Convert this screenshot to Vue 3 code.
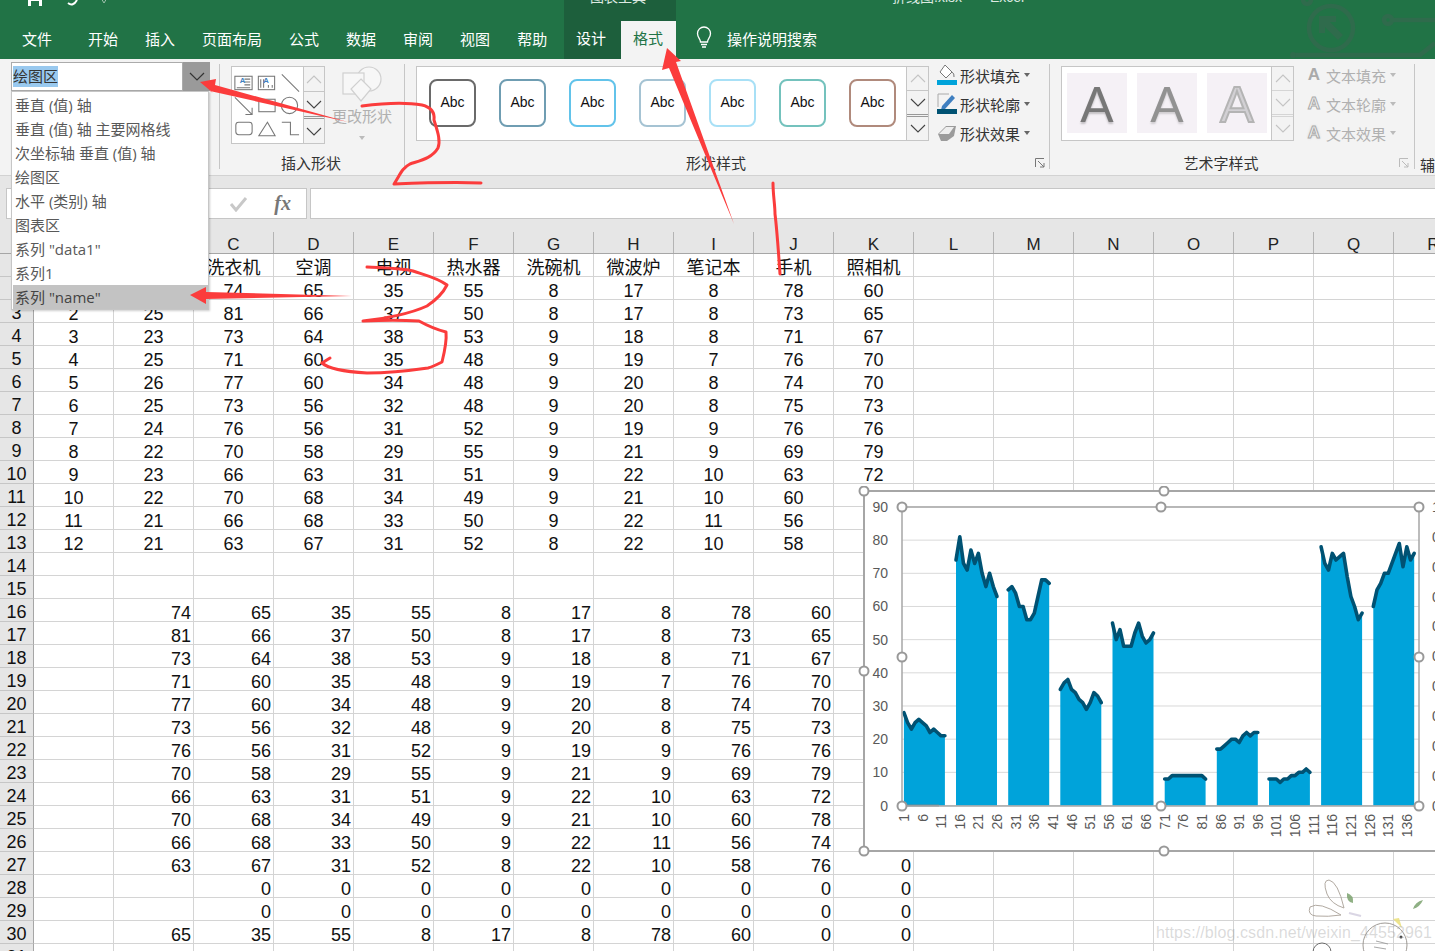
<template>
  <div class="page">
    <!-- Title bar + tabs -->
    <header class="header">
      <div class="head-main">
        <div class="strip">
          <svg class="qat" width="110" height="21" viewBox="0 0 110 21">
            <path d="M28 -6h14v12h-14z" fill="#fff" />
            <path d="M31 1h8v5h-8z" fill="#217346" />
            <path d="M68 3q5 4 9 -3" fill="none" stroke="#fff" stroke-width="2" />
            <path d="M107 -2l-3 5l-3 -5" fill="none" stroke="#9dbfab" stroke-width="1" />
          </svg>
        </div>
        <nav class="tabs">
          <span v-for="tab in mainTabs" :key="tab" class="tab">{{ tab }}</span>
        </nav>
      </div>
      <div class="head-tools">
        <div class="strip"><span class="clip-title tools-title">图表工具</span></div>
        <nav class="tabs tools-tabs">
          <span class="tab">设计</span>
          <span class="tab tab-active">格式</span>
        </nav>
      </div>
      <div class="head-right">
        <div class="strip"><span class="clip-title file-title">折线图.xlsx &nbsp;&nbsp;-&nbsp;&nbsp; Excel</span></div>
        <div class="tabs search">
          <svg width="20" height="24" viewBox="0 0 20 24">
            <path d="M6.5 16c0-3-3-4.500-3-8.500a6.500 6.500 0 0 1 13 0c0 4-3 5.500-3 8.500z" fill="none" stroke="#fff" stroke-width="1.300" />
            <path d="M7 18.500h6M8 21h4" stroke="#fff" stroke-width="1.300" />
          </svg>
          <span>操作说明搜索</span>
        </div>
        <svg class="circuit" width="145" height="59" viewBox="0 0 145 59">
          <g fill="none" stroke="#2f6b4c" stroke-width="4.500">
            <circle cx="41" cy="28" r="22" />
            <circle cx="17" cy="0" r="4" />
            <circle cx="98" cy="20" r="4" />
            <path d="M102 20h43M3 55h127l15 -12" />
          </g>
          <path d="M29 16h17v6h-6l13 13l-5 5l-13 -13v6h-6z" fill="#2f6b4c" />
          <circle cx="3" cy="55" r="3" fill="#2f6b4c" />
        </svg>
      </div>
    </header>

    <!-- Ribbon -->
    <section class="ribbon">
      <div class="group group-select">
        <div class="name-select">
          <div class="name-input"><span class="selected-text">绘图区</span></div>
          <div class="name-arrow">
            <svg width="16" height="10" viewBox="0 0 16 10"><path d="M1 1l7 7l7 -7" fill="none" stroke="#333" stroke-width="1.200" /></svg>
          </div>
        </div>
      </div>

      <div class="group group-shapes">
        <div class="group-body">
          <div class="gallery shape-gallery">
            <svg width="74" height="76" viewBox="0 0 74 76">
              <g fill="none" stroke="#777" stroke-width="1.100">
                <rect x="3" y="8" width="18" height="14" />
                <path d="M13 11h6M13 14h6M13 17h6M5 20h14" />
                <rect x="27.500" y="8" width="17" height="14" />
                <path d="M30 11v9M33 11v9M42 17v3M38 17v3" />
                <path d="M52 6l18 18" />
                <path d="M3 30l18 18M21 41v7h-7" />
                <rect x="28" y="32" width="17" height="13" />
                <circle cx="60" cy="38.500" r="8.500" />
                <rect x="4" y="56" width="17" height="13" rx="3" />
                <path d="M37 56l8 14h-17z" />
                <path d="M52 56h9v13h9" />
              </g>
              <text x="8" y="15" class="mini-a">A</text>
              <text x="32.500" y="15" class="mini-a">A</text>
            </svg>
            <div class="spin"><span v-for="n in 3" :key="n" class="spin-btn" :class="{ 'spin-first': n === 1, 'spin-more': n === 3 }"><svg width="16" height="9" viewBox="0 0 16 9"><path :d="n === 1 ? 'M1 8l7 -7l7 7' : 'M1 1l7 7l7 -7'" fill="none" :stroke="n === 1 ? '#c4c4c4' : '#444'" stroke-width="1.100" /></svg></span></div>
          </div>
          <div class="change-shape">
            <svg width="40" height="38" viewBox="0 0 40 38">
              <g fill="#f7f7f7" stroke="#d0d0d0" stroke-width="1.200">
                <circle cx="27" cy="13" r="12" />
                <rect x="1" y="7" width="21" height="21" />
                <path d="M19 13l10 10l-10 12l-10 -12z" />
              </g>
            </svg>
            <span class="change-label">更改形状</span>
            <i class="caret caret-light"></i>
          </div>
        </div>
        <div class="group-label">插入形状</div>
      </div>

      <div class="group group-styles">
        <div class="group-body">
          <div class="gallery style-gallery">
            <div class="abc-list">
              <span v-for="c in abcColors" :key="c" class="abc" :style="{ borderColor: c }">Abc</span>
            </div>
            <div class="spin"><span v-for="n in 3" :key="n" class="spin-btn" :class="{ 'spin-first': n === 1, 'spin-more': n === 3 }"><svg width="16" height="9" viewBox="0 0 16 9"><path :d="n === 1 ? 'M1 8l7 -7l7 7' : 'M1 1l7 7l7 -7'" fill="none" :stroke="n === 1 ? '#c4c4c4' : '#444'" stroke-width="1.100" /></svg></span></div>
          </div>
          <div class="commands">
            <div class="command">
              <svg width="20" height="22" viewBox="0 0 20 22">
                <path d="M8 1l7 7l-6 6l-6 -6z" fill="#fff" stroke="#777" />
                <path d="M14 7q4 3 3 6" fill="none" stroke="#777" />
                <rect x="0" y="16" width="20" height="5" fill="#00a3da" />
              </svg>
              <span>形状填充</span><i class="caret"></i>
            </div>
            <div class="command">
              <svg width="20" height="22" viewBox="0 0 20 22">
                <path d="M1 1h11M1 1v13" fill="none" stroke="#aaa" />
                <path d="M5 13l10 -11l3 3l-10 11l-4 1z" fill="#3f7fc0" />
                <rect x="0" y="16" width="20" height="5" fill="#005273" />
              </svg>
              <span>形状轮廓</span><i class="caret"></i>
            </div>
            <div class="command">
              <svg width="20" height="20" viewBox="0 0 20 20">
                <path d="M1 11l8 -8h10l-2 10l-7 5h-6z" fill="#9b9b9b" />
                <path d="M2 11l7 -7h8l-5 7z" fill="#eee" />
              </svg>
              <span>形状效果</span><i class="caret"></i>
            </div>
          </div>
        </div>
        <div class="group-label">形状样式</div>
        <svg class="launcher" width="10" height="10" viewBox="0 0 10 10"><path d="M.5 9V.5H9M3 3l6 6M9 5v4H5" fill="none" stroke="#777" /></svg>
      </div>

      <div class="group group-word">
        <div class="group-body">
          <div class="gallery word-gallery">
            <div class="word-list">
              <span class="word-tile word-dark">A</span>
              <span class="word-tile word-mid">A</span>
              <span class="word-tile word-line">A</span>
            </div>
            <div class="spin spin-off"><span v-for="n in 3" :key="n" class="spin-btn" :class="{ 'spin-first': n === 1, 'spin-more': n === 3 }"><svg width="16" height="9" viewBox="0 0 16 9"><path :d="n === 1 ? 'M1 8l7 -7l7 7' : 'M1 1l7 7l7 -7'" fill="none" stroke="#c4c4c4" stroke-width="1.100" /></svg></span></div>
          </div>
          <div class="commands commands-off">
            <div class="command"><b class="cmd-a cmd-a-solid">A</b><span>文本填充</span><i class="caret caret-light"></i></div>
            <div class="command"><b class="cmd-a cmd-a-outline">A</b><span>文本轮廓</span><i class="caret caret-light"></i></div>
            <div class="command"><b class="cmd-a cmd-a-glow">A</b><span>文本效果</span><i class="caret caret-light"></i></div>
          </div>
        </div>
        <div class="group-label">艺术字样式</div>
        <svg class="launcher launcher-off" width="10" height="10" viewBox="0 0 10 10"><path d="M.5 9V.5H9M3 3l6 6M9 5v4H5" fill="none" stroke="#bbb" /></svg>
      </div>

      <div class="group group-rest"><div class="group-label">辅</div></div>
    </section>

    <div class="band"></div>

    <!-- Formula bar -->
    <div class="formula-bar">
      <div class="fx-box">
        <svg width="20" height="16" viewBox="0 0 20 16"><path d="M2 8l5 6l10 -12" fill="none" stroke="#c8c8c8" stroke-width="3" /></svg>
        <span class="fx">fx</span>
      </div>
      <div class="formula-input"></div>
    </div>

    <!-- Sheet -->
    <div class="sheet">
      <div class="col-head">
        <span class="corner"></span>
        <span v-for="col in columns" :key="col" class="col-name">{{ col }}</span>
      </div>
      <div v-for="row in rows" :key="row.no" class="row">
        <span class="row-no">{{ row.no }}</span>
        <span
          v-for="(cell, i) in row.cells"
          :key="i"
          class="cell"
          :class="{ 'cell-num': row.right }"
        >{{ cell }}</span>
      </div>
    </div>

    <!-- Dropdown of chart elements -->
    <ul class="dropdown">
      <li v-for="(item, i) in chartParts" :key="item" :class="{ hover: i === chartParts.length - 1 }">{{ item }}</li>
    </ul>

    <!-- Chart object floating on the sheet -->
    <svg class="chart" width="579" height="372" viewBox="856 486 579 372">
      <rect x="864" y="491" width="600" height="360" fill="#fff" stroke="#a6a6a6" stroke-width="2" />
      <line
        v-for="g in gridLines"
        :key="g.v"
        x1="902"
        x2="1419"
        :y1="g.y"
        :y2="g.y"
        stroke="#d9d9d9"
        stroke-width="1"
      />
      <path v-for="(s, i) in seriesShapes" :key="'a' + i" :d="s.area" fill="#00a3da" />
      <path d="M903 805.500h36" stroke="#6e8a96" stroke-width="2" />
      <path v-for="(s, i) in seriesShapes" :key="'l' + i" :d="s.line" fill="none" stroke="#005273" stroke-width="3.600" stroke-linejoin="round" stroke-linecap="round" />
      <rect x="902" y="507" width="517" height="299" fill="none" stroke="#a6a6a6" stroke-width="1.500" />
      <text v-for="g in gridLines" :key="'t' + g.v" x="888" :y="g.y + 5" text-anchor="end" class="axis-text">{{ g.v }}</text>
      <text v-for="g in rightLabels" :key="'r' + g.t" x="1432" :y="g.y + 5" class="axis-text">{{ g.t }}</text>
      <text
        v-for="t in xLabels"
        :key="t.label"
        text-anchor="end"
        class="axis-text"
        :transform="`translate(${t.x + 5} 814) rotate(-90)`"
      >{{ t.label }}</text>
      <circle v-for="h in handles" :key="h[0] + '-' + h[1]" :cx="h[0]" :cy="h[1]" r="4.500" fill="#fff" stroke="#999" stroke-width="2" />
    </svg>

    <!-- Sticker + watermark of the blog -->
    <svg class="sticker" width="130" height="75" viewBox="1305 876 130 75">
      <g fill="none" stroke="#a59c92" stroke-width="1">
        <path d="M1344 908q-6 -26 -15 -28q-7 0 -2 14q4 10 17 14z" />
        <path d="M1341 915q-22 -14 -31 -8q-3 8 6 9q12 1 25 -1z" />
        <path d="M1349 913l12 3" stroke="#d4cfe0" stroke-width="2" />
        <circle cx="1385" cy="945" r="22" stroke="#8f8a84" />
        <path d="M1376 941l12 3M1374 947l12 2" stroke="#999" />
      </g>
      <path d="M1347 893q7 2 6 10q-7 -1 -6 -10zM1423 900q-3 7 -10 9q2 -7 10 -9z" fill="#7ca36f" />
      <path d="M1393 919l6 -1l3 10z" fill="#ebe07a" />
      <circle cx="1401" cy="937" r="1.500" fill="#222" />
      <circle cx="1322" cy="952" r="9" fill="#fff" stroke="#555" />
    </svg>
    <div class="watermark">https://blog.csdn.net/weixin_44552961</div>

    <!-- Red pen marks over the screenshot -->
    <svg class="marks" width="1435" height="951" viewBox="0 0 1435 951">
      <g fill="#fb3c3c">
        <path d="M200 82L216 79L215 85L348 122L210 91L213 93z" />
        <path d="M190 295L206 287L206 292L352 296L206 299L206 304z" />
        <path d="M667 48L681 61L676 62L734 224L669 68L662 70z" />
      </g>
      <g fill="none" stroke="#fb3c3c" stroke-width="3" stroke-linecap="round" stroke-linejoin="round">
        <path d="M362 106C385 103 405 102 422 105C430 107 435 112 434 120C437 130 441 140 438 148C432 158 422 160 410 164C402 168 400 175 394 184C420 183 455 182 481 183" />
        <path d="M367 267C385 268 400 268 413 271C425 275 438 278 447 285C443 293 436 300 427 306C412 313 385 319 363 321C385 320 402 320 419 321C428 326 438 330 446 332C447 342 444 354 442 362C436 365 432 367 428 368C400 372 385 373 367 373C350 372 330 370 322 363L330 358" />
        <path d="M773 183C773 195 775 205 775 214C777 230 778 245 780 274" />
      </g>
    </svg>
  </div>
</template>

<script setup>
import { computed } from 'vue'

const mainTabs = ['文件', '开始', '插入', '页面布局', '公式', '数据', '审阅', '视图', '帮助']
const abcColors = ['#6a6a6a', '#6f9db2', '#62c3ea', '#a5c3d3', '#a8e0f6', '#74c2bd', '#b08a7c']
const chartParts = ['垂直 (值) 轴', '垂直 (值) 轴 主要网格线', '次坐标轴 垂直 (值) 轴', '绘图区', '水平 (类别) 轴', '图表区', '系列 "data1"', '系列1', '系列 "name"']
const columns = 'ABCDEFGHIJKLMNOPQR'.split('')
const headers = ['', '', '洗衣机', '空调', '电视', '热水器', '洗碗机', '微波炉', '笔记本', '手机', '照相机']

// sheet rows 2..13
const data = [
  [1, 28, 74, 65, 35, 55, 8, 17, 8, 78, 60],
  [2, 25, 81, 66, 37, 50, 8, 17, 8, 73, 65],
  [3, 23, 73, 64, 38, 53, 9, 18, 8, 71, 67],
  [4, 25, 71, 60, 35, 48, 9, 19, 7, 76, 70],
  [5, 26, 77, 60, 34, 48, 9, 20, 8, 74, 70],
  [6, 25, 73, 56, 32, 48, 9, 20, 8, 75, 73],
  [7, 24, 76, 56, 31, 52, 9, 19, 9, 76, 76],
  [8, 22, 70, 58, 29, 55, 9, 21, 9, 69, 79],
  [9, 23, 66, 63, 31, 51, 9, 22, 10, 63, 72],
  [10, 22, 70, 68, 34, 49, 9, 21, 10, 60, 78],
  [11, 21, 66, 68, 33, 50, 9, 22, 11, 56, 74],
  [12, 21, 63, 67, 31, 52, 8, 22, 10, 58, 76]
]

const rows = computed(() => {
  const out = [{ no: 1, cells: headers }]
  data.forEach((d, i) => out.push({ no: i + 2, cells: d }))
  out.push({ no: 14, cells: [] }, { no: 15, cells: [] })
  // rows 16..27 hold the same numbers, moved one column to the left
  data.forEach((d, i) => {
    const cells = ['', ...d.slice(2)]
    if (i === 11) cells.push(0)
    out.push({ no: i + 16, cells, right: true })
  })
  const zeros = ['', '', 0, 0, 0, 0, 0, 0, 0, 0, 0]
  out.push({ no: 28, cells: zeros, right: true })
  out.push({ no: 29, cells: zeros, right: true })
  out.push({ no: 30, cells: ['', 65, 35, 55, 8, 17, 8, 78, 60, 0, 0], right: true })
  out.push({ no: 31, cells: [] })
  return out
})

// chart geometry
const yOf = (v) => 805.5 - v * 3.317
const xOf = (i) => 903.9 + i * 3.725

const gridLines = computed(() => [90, 80, 70, 60, 50, 40, 30, 20, 10, 0].map((v) => ({ v, y: yOf(v) })))
const rightLabels = computed(() => Array.from({ length: 11 }, (_, i) => ({
  t: i === 0 ? '1' : (1 - i / 10).toFixed(1).replace('0.0', '0'),
  y: 507 + i * 29.85
})))
const xLabels = computed(() => Array.from({ length: 28 }, (_, i) => ({ label: i * 5 + 1, x: xOf(i * 5) })))

const seriesShapes = computed(() => {
  const shapes = []
  for (let c = 1; c <= 10; c++) {
    const start = (c - 1) * 14
    const pts = data.map((d, i) => `${xOf(start + i).toFixed(1)} ${yOf(d[c]).toFixed(1)}`)
    const line = 'M' + pts.join('L')
    const area = `${line}L${xOf(start + 11).toFixed(1)} 805.5L${xOf(start).toFixed(1)} 805.5Z`
    shapes.push({ line, area })
  }
  return shapes
})

const handles = [
  [864, 491], [1164, 491], [864, 671], [864, 851], [1164, 851],
  [902, 507], [1161, 507], [1419, 507], [902, 657], [1419, 657], [902, 806], [1161, 806], [1419, 806]
]
</script>

<style>
html, body {
  margin: 0;
  background: #fff;
}
</style>

<style scoped>
.page {
  position: relative;
  width: 1435px;
  height: 951px;
  overflow: hidden;
  font-family: "Liberation Sans", "Noto Sans CJK SC", sans-serif;
  color: #222;
  background: #fff;
}

/* Header */
.header {
  display: flex;
  height: 59px;
  background: #217346;
  color: #fff;
  font-size: 15px;
}
.head-main { width: 564px; }
.head-tools { width: 112px; background: #1d5f3c; }
.head-right { position: relative; flex: 1; }
.strip { height: 21px; overflow: hidden; }
.qat { display: block; }
.clip-title { display: block; margin-top: -14px; line-height: 22px; font-size: 14px; color: #dce9e1; white-space: nowrap; }
.tools-title { padding-left: 26px; }
.file-title { padding-left: 216px; }
.tabs { display: flex; height: 38px; box-sizing: border-box; padding-bottom: 4px; align-items: center; gap: 27px; padding-left: 22px; }
.tab:first-child { margin-right: 9px; }
.tools-tabs { gap: 0; padding-left: 12px; padding-bottom: 0; align-items: stretch; }
.tools-tabs .tab { line-height: 36px; margin-right: 15px; }
.tools-tabs .tab-active {
  margin: 0;
  padding: 0 13px 0 12px;
  background: #f3f3f3;
  color: #217346;
}
.search { gap: 13px; padding-left: 18px; padding-bottom: 4px; position: relative; z-index: 1; }
.circuit { position: absolute; top: 0; right: 0; }

/* Ribbon */
.ribbon {
  display: flex;
  height: 117px;
  background: #f3f3f3;
  border-bottom: 1px solid #d2d2d2;
  box-sizing: border-box;
  font-size: 15px;
}
.group {
  position: relative;
  flex: none;
  box-sizing: border-box;
  margin-top: 5px;
  height: 105px;
  border-right: 1px solid #c6c6c6;
}
.group-select { width: 220px; }
.group-shapes { width: 185px; padding-left: 11px; }
.group-styles { width: 645px; padding-left: 11px; }
.group-word { width: 365px; padding-left: 11px; }
.group-rest { flex: 1; border-right: 0; padding-left: 5px; }
.group-rest .group-label { text-align: left; margin-top: 92px; padding-right: 0; }
.group-body { display: flex; height: 82px; padding-top: 2px; box-sizing: border-box; }
.group-label { text-align: center; line-height: 20px; margin-top: 8px; color: #333; padding-right: 33px; }
.group-shapes .group-label { padding-right: 13px; }

.name-select { display: flex; width: 199px; height: 29px; margin: -2px 0 0 11px; }
.name-input {
  flex: 1;
  background: #fff;
  border: 1px solid #ababab;
  padding: 3px 1px;
  line-height: 21px;
  color: #333;
}
.selected-text { background: #99c9ef; display: inline-block; }
.name-arrow { width: 27px; display: flex; align-items: center; justify-content: center; background: #9a9a9a; }

.gallery { display: flex; background: #fff; border: 1px solid #c6c6c6; box-sizing: border-box; }
.shape-gallery { width: 94px; height: 78px; }
.style-gallery { width: 513px; height: 75px; }
.word-gallery { width: 233px; height: 75px; }
.spin { margin-left: auto; width: 21px; display: flex; flex-direction: column; background: #f3f3f3; border-left: 1px solid #c6c6c6; }
.spin-btn { flex: 1; display: flex; align-items: center; justify-content: center; border-top: 1px solid #c6c6c6; }
.spin-first { border-top: 0; }
.spin-more { border-top: 3px double #999; }
.spin-off .spin-btn { border-color: #d5d5d5; }
.mini-a { font-size: 8px; font-weight: bold; fill: #3f7fc0; }

.change-shape { width: 60px; margin-left: 7px; display: flex; flex-direction: column; align-items: center; }
.change-label { color: #b0b0b0; line-height: 20px; margin-top: 3px; white-space: nowrap; }

.caret { display: inline-block; width: 0; height: 0; border: 3px solid transparent; border-top: 4px solid #666; border-bottom: 0; margin-left: 4px; }
.caret-light { border-top-color: #bbb; }
.change-shape .caret { margin: 9px 0 0; }

.abc-list { display: flex; gap: 23px; padding: 12px 0 0 12px; }
.abc {
  box-sizing: border-box;
  width: 47px;
  height: 48px;
  border: 2px solid #777;
  border-radius: 8px;
  background: #fff;
  font-size: 14px;
  color: #111;
  text-align: center;
  line-height: 42px;
}
.commands { display: flex; flex-direction: column; gap: 9px; margin-top: -1px; padding: 0 0 0 8px; white-space: nowrap; color: #333; }
.command { display: flex; align-items: center; height: 20px; gap: 3px; }
.command svg { flex: none; }
.command .caret { margin-left: 1px; }
.commands-off { color: #b0b0b0; padding-left: 11px; }

.word-list { display: flex; gap: 10px; padding: 6px 0 0 5px; }
.word-tile {
  width: 60px;
  height: 60px;
  background: #f5f1f6;
  text-align: center;
  font-size: 50px;
  line-height: 64px;
  font-family: "Liberation Sans", sans-serif;
}
.word-dark { color: #777; text-shadow: 0 2px 2px #c2bfc3; }
.word-mid { color: #929292; text-shadow: 0 2px 2px #d0cdd1; }
.word-line { color: #d2d0d4; -webkit-text-stroke: 2px #b4b4b4; }
.cmd-a { width: 18px; text-align: center; font-size: 17px; font-family: "Liberation Sans", sans-serif; }
.cmd-a-solid { color: #aaa; }
.cmd-a-outline { color: #f3f3f3; -webkit-text-stroke: 1px #aaa; }
.cmd-a-glow { color: #f3f3f3; -webkit-text-stroke: 1px #aaa; text-shadow: 0 0 3px #ccc; }
.launcher { position: absolute; right: 4px; bottom: 1px; }
.launcher-off { right: 5px; }

.band { height: 12px; background: #e6e6e6; }

/* Formula bar */
.formula-bar { display: flex; gap: 3px; height: 31px; padding-left: 6px; background: #e6e6e6; }
.fx-box {
  box-sizing: border-box;
  width: 301px;
  display: flex;
  justify-content: flex-end;
  align-items: center;
  gap: 25px;
  padding-right: 15px;
  background: #fff;
  border: 1px solid #c6c6c6;
}
.fx { font-family: "Liberation Serif", serif; font-style: italic; font-weight: bold; font-size: 20px; color: #777; }
.formula-input { flex: 1; background: #fff; border: 1px solid #c6c6c6; border-right: 0; }

/* Sheet */
.sheet { font-size: 18px; color: #111; }
.col-head {
  display: flex;
  height: 35px;
  padding-top: 13px;
  box-sizing: border-box;
  background: #e6e6e6;
  border-bottom: 1px solid #a6a6a6;
  font-size: 17px;
  color: #222;
}
.corner { flex: none; width: 34px; }
.col-name {
  flex: none;
  width: 80px;
  box-sizing: border-box;
  text-align: center;
  line-height: 25px;
  border-right: 1px solid #b4b4b4;
}
.row { display: flex; height: 23px; }
.row-no {
  flex: none;
  width: 34px;
  box-sizing: border-box;
  text-align: center;
  line-height: 26px;
  background: #e6e6e6;
  border-right: 1px solid #a6a6a6;
  border-bottom: 1px solid #c6c6c6;
  font-family: "Liberation Sans Narrow", "Liberation Sans", sans-serif;
}
.row::after {
  content: '';
  flex: 1;
  border-bottom: 1px solid #d4d4d4;
  background-image: repeating-linear-gradient(to right, transparent 0 79px, #d4d4d4 79px 80px);
}
.cell {
  flex: none;
  width: 80px;
  box-sizing: border-box;
  height: 23px;
  text-align: center;
  line-height: 29px;
  overflow: hidden;
  border-right: 1px solid #d4d4d4;
  border-bottom: 1px solid #d4d4d4;
  font-family: "Liberation Sans Narrow", "Liberation Sans", "Noto Sans CJK SC", sans-serif;
  white-space: nowrap;
}
.cell-num { text-align: right; padding-right: 2px; }

/* Overlays */
.dropdown {
  position: absolute;
  top: 91px;
  left: 11px;
  width: 198px;
  margin: 0;
  padding: 1px 0 0 1px;
  box-sizing: border-box;
  list-style: none;
  background: #fff;
  border: 1px solid #c6c6c6;
  box-shadow: 1px 1px 2px rgba(0, 0, 0, 0.2);
  font-family: "Open Sans", "Noto Sans CJK SC", sans-serif;
  font-size: 15px;
  color: #595959;
}
.dropdown li { height: 24px; line-height: 24px; padding-left: 2px; white-space: nowrap; }
.dropdown li.hover { background: #c3c3c3; color: #444; }

.chart { position: absolute; top: 486px; left: 856px; }
.axis-text { font-size: 14px; fill: #595959; font-family: "Liberation Sans", sans-serif; }
.sticker { position: absolute; left: 1305px; top: 876px; opacity: 0.85; }
.watermark {
  position: absolute;
  left: 1156px;
  top: 923px;
  font-size: 16px;
  line-height: 20px;
  letter-spacing: 0.1px;
  color: rgba(150, 150, 150, 0.35);
  white-space: nowrap;
}
.marks { position: absolute; top: 0; left: 0; pointer-events: none; }
</style>
